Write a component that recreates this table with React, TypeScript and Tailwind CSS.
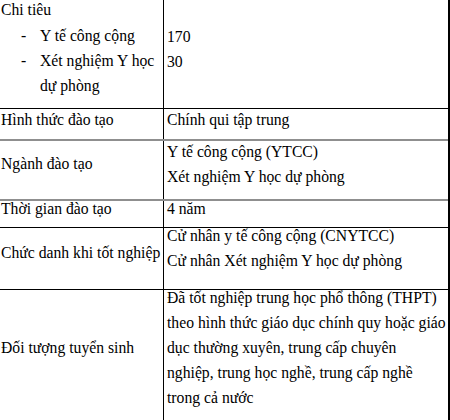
import React from 'react';

type RowProps = {
  h: string;
  border: string;
  left: React.ReactNode;
  right: React.ReactNode;
  leftTop: string;
  rightTop: string;
};

const Row: React.FC<RowProps> = ({ h, border, left, right, leftTop, rightTop }) => (
  <div className={`grid grid-cols-[163px_1fr] ${h} ${border}`}>
    <div className="pl-[1px]">
      <div className={leftTop}>{left}</div>
    </div>
    <div className="border-l border-black pl-[3px]">
      <div className={rightTop}>{right}</div>
    </div>
  </div>
);

const Lines = ({ items }: { items: string[] }) => (
  <>
    {items.map((t) => (
      <div key={t} className="whitespace-nowrap">{t}</div>
    ))}
  </>
);

export default function App() {
  return (
    <div className="w-[450px] h-[420px] overflow-hidden bg-white text-black font-['Liberation_Serif','Times_New_Roman',serif] text-[15.7px] leading-[25px]">
      <div className="w-[450px] border-r-2 border-black">
        {/* Chỉ tiêu */}
        <Row
          h="h-[109px]"
          border="border-b border-black"
          leftTop="-mt-[3px]"
          rightTop="mt-[24px]"
          left={
            <>
              <div>Chi tiêu</div>
              <div className="flex pl-[20px] pt-[1px]">
                <span className="w-[19px] shrink-0">-</span>
                <span>Y tế công cộng</span>
              </div>
              <div className="flex pl-[20px]">
                <span className="w-[19px] shrink-0">-</span>
                <span>
                  Xét nghiệm Y học
                  <br />
                  dự phòng
                </span>
              </div>
            </>
          }
          right={<Lines items={['170', '30']} />}
        />

        <Row
          h="h-[32px]"
          border="border-b-2 border-[#8f8f8f]"
          leftTop="-mt-[2px]"
          rightTop="-mt-[2px]"
          left="Hình thức đào tạo"
          right="Chính qui tập trung"
        />

        <Row
          h="h-[60px]"
          border="border-b-2 border-[#8f8f8f]"
          leftTop="mt-[10px]"
          rightTop="-mt-[2px]"
          left="Ngành đào tạo"
          right={<Lines items={['Y tế công cộng (YTCC)', 'Xét nghiệm Y học dự phòng']} />}
        />

        <Row
          h="h-[27px]"
          border="border-b border-black"
          leftTop="-mt-[5px]"
          rightTop="-mt-[5px]"
          left="Thời gian đào tạo"
          right="4 năm"
        />

        <Row
          h="h-[62px]"
          border="border-b border-black"
          leftTop="mt-[12px]"
          rightTop="-mt-[5px]"
          left={<span className="whitespace-nowrap">Chức danh khi tốt nghiệp</span>}
          right={
            <Lines items={['Cử nhân y tế công cộng (CNYTCC)', 'Cử nhân Xét nghiệm Y học dự phòng']} />
          }
        />

        <Row
          h="h-[140px]"
          border=""
          leftTop="mt-[45px]"
          rightTop="-mt-[5px]"
          left="Đối tượng tuyển sinh"
          right={
            <Lines
              items={[
                'Đã tốt nghiệp trung học phổ thông (THPT)',
                'theo hình thức giáo dục chính quy hoặc giáo',
                'dục thường xuyên, trung cấp chuyên',
                'nghiệp, trung học nghề, trung cấp nghề',
                'trong cả nước',
              ]}
            />
          }
        />
      </div>
    </div>
  );
}
